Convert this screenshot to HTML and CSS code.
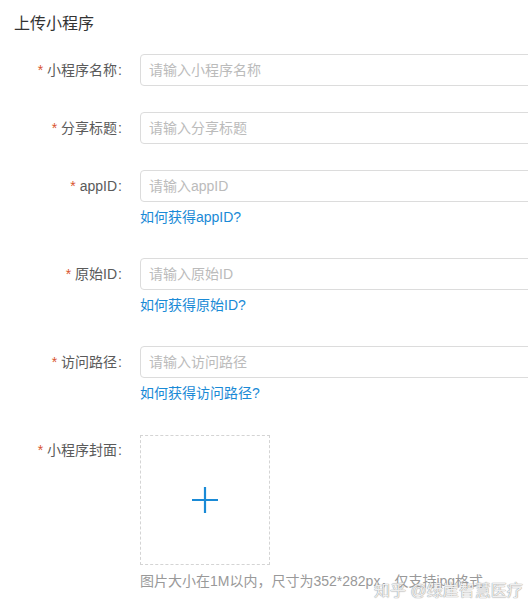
FILE: index.html
```html
<!DOCTYPE html>
<html lang="zh">
<head>
<meta charset="utf-8">
<link rel="stylesheet" href="styles.css">
</head>
<body>
<div class="page">
  <h1 class="title">上传小程序</h1>
  <form class="form">
    <div class="item">
      <label class="label"><span class="req">*</span>小程序名称<span class="colon">:</span></label>
      <div class="control"><input class="input" placeholder="请输入小程序名称"></div>
    </div>
    <div class="item">
      <label class="label"><span class="req">*</span>分享标题<span class="colon">:</span></label>
      <div class="control"><input class="input" placeholder="请输入分享标题"></div>
    </div>
    <div class="item item-link">
      <label class="label"><span class="req">*</span>appID<span class="colon">:</span></label>
      <div class="control"><input class="input" placeholder="请输入appID"><a class="help">如何获得appID?</a></div>
    </div>
    <div class="item item-link">
      <label class="label"><span class="req">*</span>原始ID<span class="colon">:</span></label>
      <div class="control"><input class="input" placeholder="请输入原始ID"><a class="help">如何获得原始ID?</a></div>
    </div>
    <div class="item item-link">
      <label class="label"><span class="req">*</span>访问路径<span class="colon">:</span></label>
      <div class="control"><input class="input" placeholder="请输入访问路径"><a class="help">如何获得访问路径?</a></div>
    </div>
    <div class="item">
      <label class="label"><span class="req">*</span>小程序封面<span class="colon">:</span></label>
      <div class="control">
        <div class="upload">
          <svg width="28" height="28" viewBox="0 0 28 28"><path d="M14 1V27M1 14H27" stroke="#1a8ad6" stroke-width="2.2" fill="none"/></svg>
        </div>
        <p class="hint">图片大小在1M以内，尺寸为352*282px，仅支持jpg格式</p>
      </div>
    </div>
  </form>
  <div class="watermark">知乎 @绿崖智慧医疗</div>
</div>
</body>
</html>
```

FILE: styles.css
```css
html, body {
  margin: 0;
  padding: 0;
  background: #fff;
  overflow: hidden;
}
body {
  font-family: "Liberation Sans", "Noto Sans CJK SC", sans-serif;
  color: #333;
}
.page {
  position: relative;
  width: 528px;
  height: 612px;
  overflow: hidden;
}
.title {
  margin: 0;
  padding: 13px 0 0 14px;
  font-size: 16px;
  font-weight: normal;
  line-height: 22px;
  color: #333;
}
.form {
  margin-top: 19px;
}
.item {
  display: flex;
  align-items: flex-start;
  margin-bottom: 26px;
}
.item-link {
  margin-bottom: 30px;
}
.label {
  width: 122px;
  flex: none;
  padding-right: 18px;
  text-align: right;
  font-size: 14px;
  line-height: 32px;
  color: #5a5a5a;
}
.req {
  color: #d9542f;
  margin-right: 4px;
}
.colon {
  margin-left: 1px;
}
.control {
  flex: none;
  display: flex;
  flex-direction: column;
  align-items: flex-start;
}
.input {
  box-sizing: border-box;
  width: 420px;
  height: 32px;
  border: 1px solid #dcdcdc;
  border-radius: 4px;
  padding: 0 8px;
  font-family: inherit;
  font-size: 14px;
  color: #333;
  outline: none;
}
.input::placeholder {
  color: #bbb;
}
.help {
  margin-top: 4px;
  font-size: 14px;
  line-height: 22px;
  color: #1a8ad6;
  cursor: pointer;
}
.upload {
  box-sizing: border-box;
  width: 130px;
  height: 130px;
  margin-top: 1px;
  border: 1px dashed #d4d4d4;
  display: flex;
  align-items: center;
  justify-content: center;
}
.hint {
  margin: 5px 0 0;
  font-size: 14px;
  line-height: 22px;
  color: #999;
  white-space: nowrap;
}
.watermark {
  position: absolute;
  left: 374px;
  top: 581px;
  font-size: 16px;
  line-height: 20px;
  color: rgba(255,255,255,0.85);
  text-shadow: 0 0 1px #999, 0 0 1px #999;
  white-space: nowrap;
}
```
